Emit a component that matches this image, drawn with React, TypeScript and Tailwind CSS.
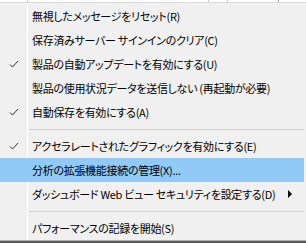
type Item =
  | { kind: 'item'; label: string; checked?: boolean; active?: boolean; submenu?: boolean }
  | { kind: 'sep' };

const items: Item[] = [
  { kind: 'item', label: '無視したメッセージをリセット(R)' },
  { kind: 'item', label: '保存済みサーバー サインインのクリア(C)' },
  { kind: 'item', label: '製品の自動アップデートを有効にする(U)', checked: true },
  { kind: 'item', label: '製品の使用状況データを送信しない (再起動が必要)' },
  { kind: 'item', label: '自動保存を有効にする(A)', checked: true },
  { kind: 'sep' },
  { kind: 'item', label: 'アクセラレートされたグラフィックを有効にする(E)', checked: true },
  { kind: 'item', label: '分析の拡張機能接続の管理(X)...', active: true },
  { kind: 'item', label: 'ダッシュボード Web ビュー セキュリティを設定する(D)', submenu: true },
  { kind: 'sep' },
  { kind: 'item', label: 'パフォーマンスの記録を開始(S)' },
];

function Check() {
  return (
    <svg width="10" height="8" viewBox="0 0 10 8" className="block">
      <polyline points="1,4.5 3.5,7 9,1" fill="none" stroke="#333" strokeWidth="1" />
    </svg>
  );
}

export default function App() {
  return (
    <div className="w-[306px] h-[243px] flex flex-col bg-[#f0f0f0] overflow-hidden font-['Noto_Sans_CJK_JP',sans-serif] [font-feature-settings:'palt'] text-[11px] tracking-[-0.3px] text-black">
      {/* strip of the window behind */}
      <div className="h-[3px] shrink-0 flex bg-white border-b border-[#d9d9d9]">
        <div className="w-[28px] border-r border-[#c8c8c8]" />
        <div className="w-[180px]" />
        <div className="w-[20px] border-x border-[#c8c8c8]" />
        <div className="w-[50px]" />
        <div className="flex-1 border-l border-[#a0a0a0]" />
      </div>

      <div className="flex-1 flex flex-col pt-[1px]">
        {items.map((it, i) =>
          it.kind === 'sep' ? (
            <div key={i} className="h-[10px] shrink-0 flex">
              <div className="w-[28px] shrink-0 border-r border-white" />
              <div className="flex-1 flex items-center pl-[1px] pr-[2px]">
                <div className="h-[1px] w-full bg-[#d0d0d0]" />
              </div>
            </div>
          ) : (
            <div
              key={i}
              className={`h-[24px] shrink-0 flex items-center mr-[2px] ${it.active ? 'bg-[#91c9f7]' : ''}`}
            >
              <div
                className={`w-[28px] h-full shrink-0 flex items-center justify-center border-r ${
                  it.active ? 'border-transparent' : 'border-white'
                }`}
              >
                {it.checked && <Check />}
              </div>
              <div className="pl-[4px] whitespace-nowrap leading-none">{it.label}</div>
              {it.submenu && (
                <div className="ml-auto shrink-0 w-0 h-0 mr-[12px] border-y-[4px] border-y-transparent border-l-[4px] border-l-black" />
              )}
            </div>
          )
        )}
      </div>

      {/* strip of the window below */}
      <div className="h-[3px] shrink-0 bg-[#5a5a5a] border-t border-[#b0b0b0]" />
    </div>
  );
}
